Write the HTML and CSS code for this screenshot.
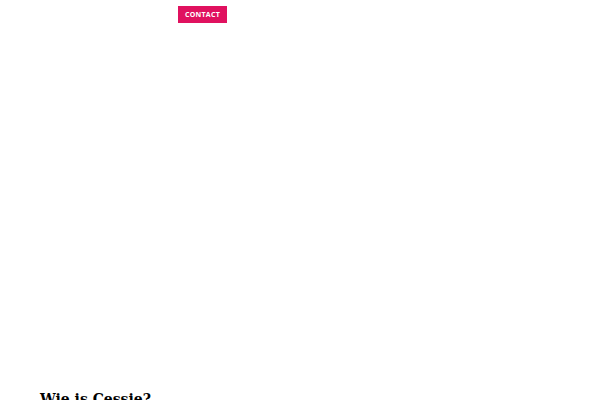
FILE: index.html
```
<!DOCTYPE html>
<html>
<head>
<meta charset="utf-8">
<link rel="stylesheet" href="styles.css">
</head>
<body>
<header class="top">
  <a class="contact" href="#">CONTACT</a>
</header>
<main class="hero"></main>
<section class="intro">
  <h2 class="title">Wie is Cessie?</h2>
</section>
</body>
</html>
```
FILE: styles.css
```
html, body { margin: 0; padding: 0; background: #fff; }
body { width: 600px; height: 400px; overflow: hidden; }
.top { display: flex; padding: 6px 0 0 178px; height: 17px; }
.contact {
  display: flex; align-items: center; justify-content: center;
  width: 49px; height: 17px;
  background: #e0115f; color: #fff;
  font-family: "Open Sans", sans-serif; font-weight: 700;
  font-size: 7px; letter-spacing: 0.3px; text-decoration: none;
}
.hero { height: 366px; }
.intro { padding-left: 40px; }
.title {
  margin: 0; font-family: "DejaVu Serif", serif; font-weight: 700;
  font-size: 14px; line-height: 20px; color: #000;
}
```
